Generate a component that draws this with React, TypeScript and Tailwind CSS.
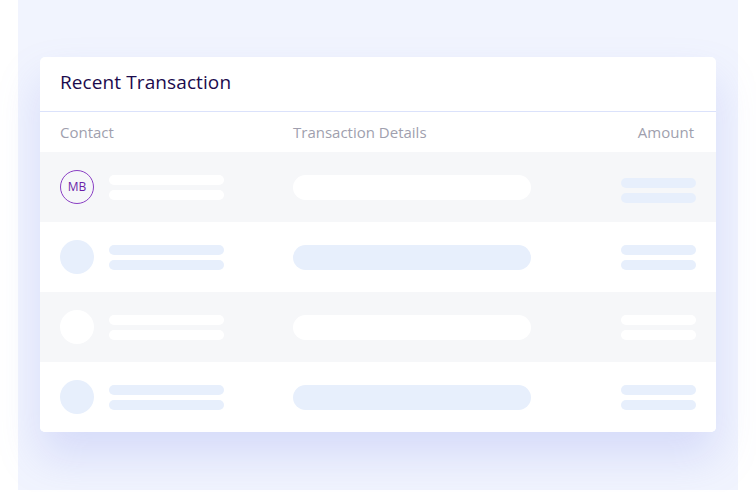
const rows = [
  { shade: true, initials: 'MB', amountFill: 'bg-[#e7effc]', amountOffset: 'mt-[6px]' },
  { shade: false, amountFill: 'bg-[#e7effc]', amountOffset: '' },
  { shade: true, amountFill: 'bg-white', amountOffset: '' },
  { shade: false, amountFill: 'bg-[#e7effc]', amountOffset: '' },
];

type RowProps = {
  shade: boolean;
  initials?: string;
  amountFill: string;
  amountOffset: string;
};

const Row = ({ shade, initials, amountFill, amountOffset }: RowProps) => {
  const fill = shade ? 'bg-white' : 'bg-[#e7effc]';
  return (
    <div className={`flex h-[70px] items-center px-5 ${shade ? 'bg-[#f6f7f9]' : 'bg-white'}`}>
      <div className="flex w-[233px] items-center gap-[15px]">
        {initials ? (
          <div className="flex h-[34px] w-[34px] items-center justify-center rounded-full border border-[#8a3fc4] text-[12px] text-[#6a1fa8]">
            {initials}
          </div>
        ) : (
          <div className={`h-[34px] w-[34px] rounded-full ${fill}`} />
        )}
        <div className="flex flex-col gap-[5px]">
          <div className={`h-[10px] w-[115px] rounded-full ${fill}`} />
          <div className={`h-[10px] w-[115px] rounded-full ${fill}`} />
        </div>
      </div>
      <div className={`h-[25px] w-[238px] rounded-full ${fill}`} />
      <div className="flex flex-1 justify-end">
        <div className={`flex flex-col gap-[5px] ${amountOffset}`}>
          <div className={`h-[10px] w-[75px] rounded-full ${amountFill}`} />
          <div className={`h-[10px] w-[75px] rounded-full ${amountFill}`} />
        </div>
      </div>
    </div>
  );
};

const App = () => {
  return (
    <div className="h-[492px] w-[756px] bg-white font-['Open_Sans',sans-serif]">
      <div className="mx-[18px] h-[490px] bg-[#f1f4fe] px-[22px] pt-[57px]">
        <div className="overflow-hidden rounded-[5px] bg-white shadow-[0_24px_44px_rgba(120,130,230,0.22)]">
          <div className="flex h-[55px] items-center border-b border-[#dbe2fb] px-5 pb-[4px]">
            <h2 className="text-[19px] font-medium tracking-[0.1px] text-[#1b0b4d]">Recent Transaction</h2>
          </div>
          <div className="flex h-[40px] items-center px-5 text-[15px] text-[#a09fae]">
            <span className="w-[233px]">Contact</span>
            <span>Transaction Details</span>
            <span className="ml-auto pr-[2px]">Amount</span>
          </div>
          {rows.map((r, i) => (
            <Row key={i} shade={r.shade} initials={r.initials} amountFill={r.amountFill} amountOffset={r.amountOffset} />
          ))}
        </div>
      </div>
    </div>
  );
};

export default App;
